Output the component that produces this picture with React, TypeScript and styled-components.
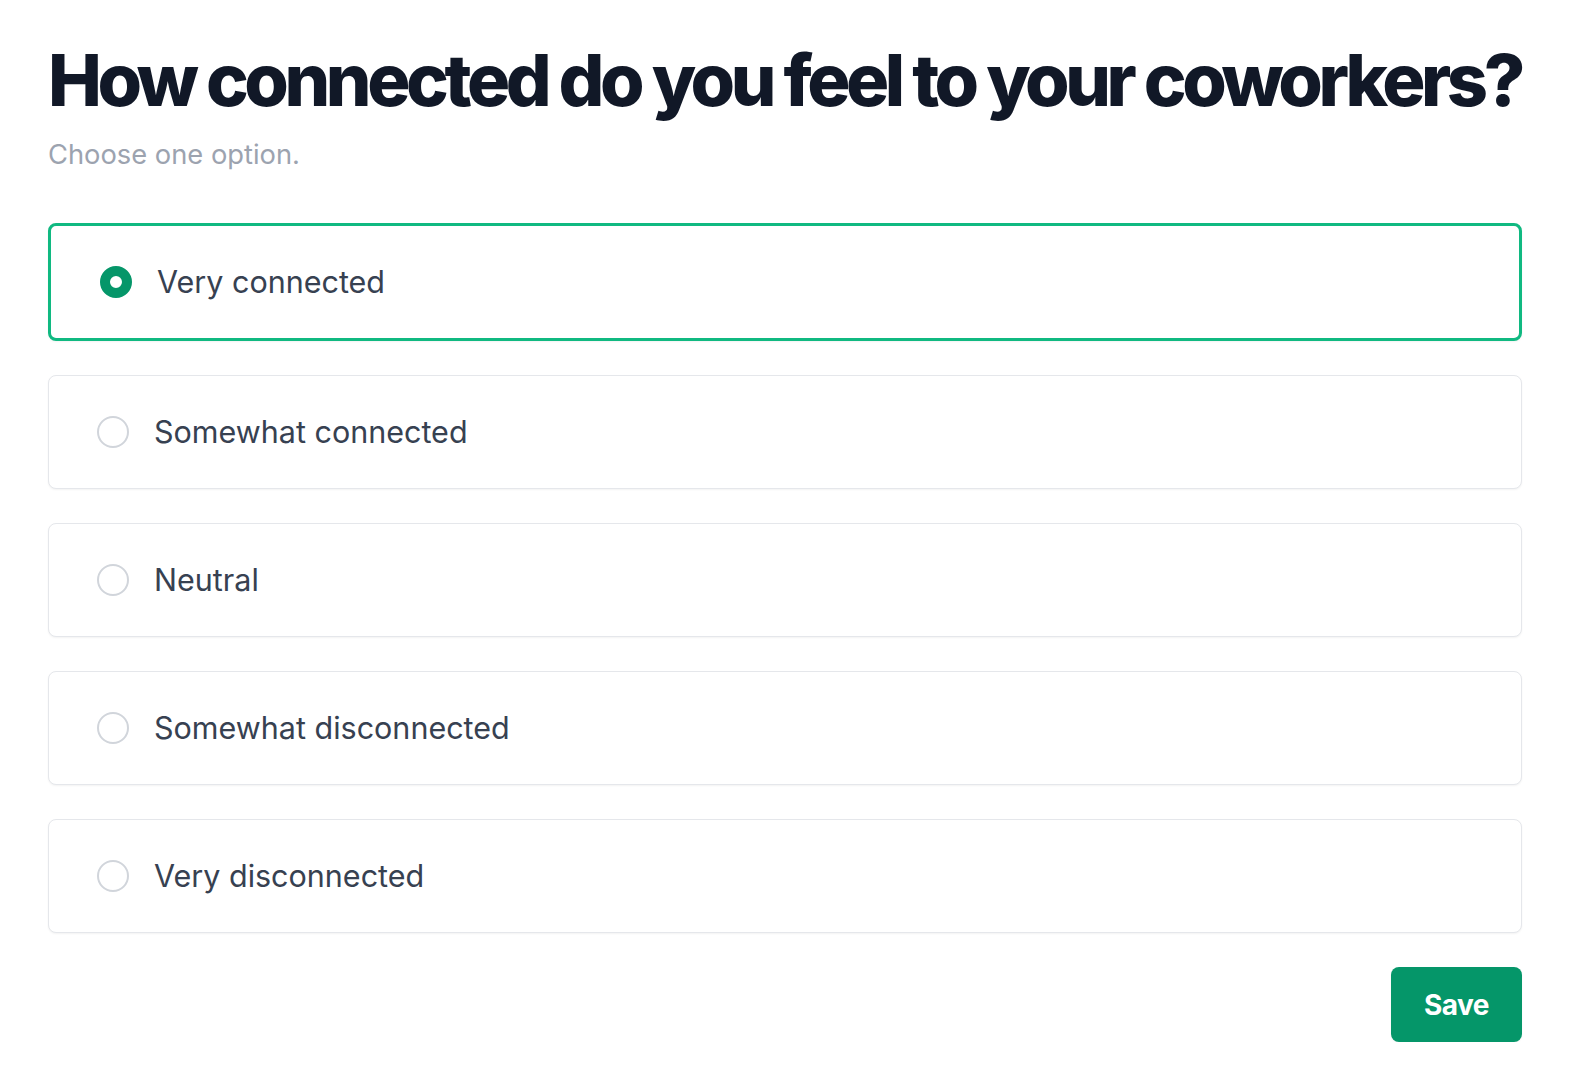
import React, { useState } from "react";
import styled, { createGlobalStyle } from "styled-components";

const options = ["Very connected", "Somewhat connected", "Neutral", "Somewhat disconnected", "Very disconnected"];

const GlobalStyle = createGlobalStyle`
    html, body {
        margin: 0;
        padding: 0;
        background: #ffffff;
    }

    body {
        font-family: Inter, "Noto Sans", "Liberation Sans", sans-serif;
        -webkit-font-smoothing: antialiased;
    }

    * {
        box-sizing: border-box;
    }
`;

export default function App() {
    const [selected, setSelected] = useState(options[0]);

    return (
        <>
            <GlobalStyle />
            <Page>
                <Title>How connected do you feel to your coworkers?</Title>
                <Subtitle>Choose one option.</Subtitle>
                <OptionList role="radiogroup">
                    {options.map((option) => {
                        const active = option === selected;
                        return (
                            <OptionCard key={option} $active={active}>
                                <HiddenInput
                                    type="radio"
                                    name="connected"
                                    checked={active}
                                    onChange={() => setSelected(option)}
                                />
                                <RadioDot $active={active} />
                                <OptionLabel>{option}</OptionLabel>
                            </OptionCard>
                        );
                    })}
                </OptionList>
                <Footer>
                    <SaveButton type="button">Save</SaveButton>
                </Footer>
            </Page>
        </>
    );
}

const Page = styled.main`
    width: 1474px;
    margin-left: 48px;
    padding-top: 44px;
    display: flex;
    flex-direction: column;
`;

const Title = styled.h1`
    margin: 0;
    font-size: 72px;
    line-height: 1;
    font-weight: 800;
    letter-spacing: -4.4px;
    white-space: nowrap;
    color: #111827;
`;

const Subtitle = styled.p`
    margin: 21px 0 0;
    font-size: 27.3px;
    line-height: 36px;
    color: #9ca3af;
`;

const OptionList = styled.div`
    margin-top: 50px;
    display: flex;
    flex-direction: column;
    gap: 34px;
`;

const OptionCard = styled.label<{ $active?: boolean }>`
    display: flex;
    align-items: center;
    gap: 25px;
    padding: ${(props) => (props.$active ? "38px 49px" : "38px 48px")};
    border: ${(props) => (props.$active ? "3px solid #10b981" : "1px solid #e5e7eb")};
    border-radius: 8px;
    background: #ffffff;
    box-shadow: 0 1px 2px rgba(0, 0, 0, 0.05);
    cursor: pointer;
`;

const HiddenInput = styled.input`
    position: absolute;
    opacity: 0;
    width: 0;
    height: 0;
`;

const RadioDot = styled.span<{ $active?: boolean }>`
    flex: none;
    width: 32px;
    height: 32px;
    border-radius: 50%;
    background: #ffffff;
    border: ${(props) => (props.$active ? "10px solid #059669" : "2px solid #d1d5db")};
`;

const OptionLabel = styled.span`
    font-size: 30.5px;
    line-height: 36px;
    color: #374151;
`;

const Footer = styled.div`
    display: flex;
    justify-content: flex-end;
    margin-top: 34px;
`;

const SaveButton = styled.button`
    height: 75px;
    padding: 0 33px;
    border: none;
    border-radius: 8px;
    background: #059669;
    color: #ffffff;
    font-family: Inter, "Noto Sans", "Liberation Sans", sans-serif;
    font-size: 28px;
    font-weight: 700;
    letter-spacing: -0.5px;
    box-shadow: 0 1px 2px rgba(0, 0, 0, 0.05);
    cursor: pointer;
`;
